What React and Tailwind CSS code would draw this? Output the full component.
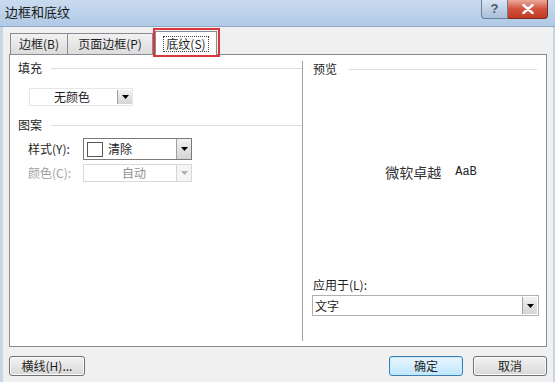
import React from "react";

const font = { fontFamily: '"Noto Sans CJK SC", "Noto Sans", sans-serif' };

function Arrow({ disabled }) {
  return (
    <div className={"flex items-center justify-center w-[15px] h-full border-l " + (disabled ? "border-[#d5d5d5] bg-[#f4f4f4]" : "border-[#a0a0a0] bg-gradient-to-b from-[#f2f2f2] to-[#d4d4d4]")}>
      <svg width="7" height="4" viewBox="0 0 7 4">
        <path d="M0 0 L7 0 L3.5 4 Z" fill={disabled ? "#b0b0b0" : "#000"} />
      </svg>
    </div>
  );
}

function SectionLabel({ children, lineClass }) {
  return (
    <div className="flex items-center">
      <span className="text-[12px] leading-[14px] text-[#1e1e1e]">{children}</span>
      <div className={"h-px bg-[#d5dfe5] flex-1 " + (lineClass || "")} />
    </div>
  );
}

function Btn({ children, primary, className }) {
  return (
    <div
      className={
        "h-[20px] flex items-center justify-center rounded-[3px] border text-[12px] text-[#1e1e1e] " +
        (primary
          ? "border-[#3c7fb1] bg-gradient-to-b from-[#eaf6fd] to-[#bee6fd] shadow-[inset_0_0_0_1px_#c5e9ff]"
          : "border-[#707070] bg-gradient-to-b from-[#f2f2f2] to-[#d8d8d8] shadow-[inset_0_0_0_1px_#fcfcfc]") +
        " " + (className || "")
      }
    >
      {children}
    </div>
  );
}

export default function App() {
  return (
    <div className="w-[555px] h-[382px] bg-[#f0f0f0] flex flex-col overflow-hidden relative" style={font}>
      {/* Title bar */}
      <div className="h-[27px] shrink-0 flex items-start bg-gradient-to-b from-[#c9dbef] to-[#b0c9e5] border-b border-[#8ea8c8] relative">
        <span className="pl-[5px] pt-[4px] text-[13px] leading-[16px] text-[#1a1a1a]">边框和底纹</span>
        <div className="ml-auto mr-[7px] flex h-[20px]">
          <div className="w-[27px] h-[19px] flex items-center justify-center rounded-bl-[4px] border border-t-0 border-[#6f7f96] bg-gradient-to-b from-[#d8e4f2] to-[#a9bfdb] text-[13px] font-bold text-[#4a5a72]" style={{ fontFamily: '"Liberation Sans", sans-serif' }}>?</div>
          <div className="w-[40px] h-[19px] flex items-center justify-center rounded-br-[4px] border border-t-0 border-l-0 border-[#7a2a20] bg-gradient-to-b from-[#e9a99b] via-[#d0513c] to-[#c13a25]">
            <svg width="12" height="10" viewBox="0 0 12 10">
              <path d="M1.5 1 L10.5 9 M10.5 1 L1.5 9" stroke="#fff" strokeWidth="2.6" strokeLinecap="round" />
            </svg>
          </div>
        </div>
      </div>

      {/* Body */}
      <div className="flex-1 flex flex-col border-l-[3px] border-r-[2px] border-[#c9d6e6] pl-[6px] pr-[6px]">
        {/* Tabs */}
        <div className="h-[27px] flex items-end relative pl-[1px]">
          <div className="h-[21px] w-[58px] flex items-center justify-center border border-b-0 border-[#898c95] bg-gradient-to-b from-[#f2f2f2] to-[#dcdcdc] text-[12px] text-[#1e1e1e]">边框(B)</div>
          <div className="h-[21px] w-[85px] flex items-center justify-center border border-b-0 border-l-0 border-[#898c95] bg-gradient-to-b from-[#f2f2f2] to-[#dcdcdc] text-[12px] text-[#1e1e1e]">页面边框(P)</div>
          <div className="h-[24px] w-[62px] ml-[2px] mb-[-1px] z-10 flex items-center justify-center border border-b-0 border-[#898c95] bg-white text-[12px] text-[#1e1e1e]">
            <span className="border border-dotted border-[#444] px-[2px] leading-[14px]">底纹(S)</span>
          </div>
          <div className="absolute left-[144px] top-[1px] w-[67px] h-[29px] border-2 border-[#d9363e] z-20" />
        </div>

        {/* Panel */}
        <div className="h-[293px] border border-[#898c95] bg-white flex">
          {/* Left column */}
          <div className="w-[292px] flex flex-col pl-[8px] pt-[6px]">
            <SectionLabel lineClass="ml-[9px] mr-[0px]">填充</SectionLabel>
            <div className="ml-[11px] mt-[13px] w-[104px] h-[18px] flex border border-[#e6e6e6] bg-white">
              <div className="flex-1 flex items-center pl-[24px] text-[12px] text-[#1e1e1e]">无颜色</div>
              <div className="my-[1px] mr-[1px] w-[14px]">
                <Arrow />
              </div>
            </div>
            <div className="mt-[12px]">
              <SectionLabel lineClass="ml-[9px]">图案</SectionLabel>
            </div>
            <div className="mt-[6px] flex items-center">
              <span className="w-[65px] pl-[10px] text-[12px] text-[#1e1e1e]">样式(Y):</span>
              <div className="w-[109px] h-[22px] flex border border-[#7a7a7a] bg-white">
                <div className="flex-1 flex items-center pl-[3px] gap-[5px]">
                  <div className="w-[16px] h-[15px] border border-[#555]" />
                  <span className="text-[12px] text-[#1e1e1e]">清除</span>
                </div>
                <Arrow />
              </div>
            </div>
            <div className="mt-[4px] flex items-center">
              <span className="w-[65px] pl-[10px] text-[12px] text-[#a0a0a0]">颜色(C):</span>
              <div className="w-[109px] h-[18px] flex border border-[#d9d9d9] bg-white">
                <div className="flex-1 flex items-center justify-center pl-[8px] text-[12px] text-[#909090]">自动</div>
                <Arrow disabled />
              </div>
            </div>
          </div>

          {/* Right column */}
          <div className="flex-1 flex flex-col mt-[6px] mb-[5px] border-l border-[#a0a0a0] pl-[10px] pr-[7px] pt-[1px]">
            <SectionLabel lineClass="ml-[12px] mr-[2px]">预览</SectionLabel>
            <div className="flex-1 flex items-center justify-center pb-[10px] pl-[10px]">
              <span className="text-[14px] text-[#333]">微软卓越</span>
              <span className="ml-[14px] text-[12px] text-[#222]" style={{ fontFamily: '"Liberation Mono", monospace' }}>AaB</span>
            </div>
            <span className="text-[12px] leading-[14px] text-[#1e1e1e]">应用于(L):</span>
            <div className="mt-[3px] mb-[25px] -ml-[1px] h-[21px] flex border border-[#b0b0b0] bg-white">
              <div className="flex-1 flex items-center pl-[2px] text-[12px] text-[#1e1e1e]">文字</div>
              <div className="my-[1px] mr-[1px]">
                <Arrow />
              </div>
            </div>
          </div>
        </div>

        {/* Bottom buttons */}
        <div className="flex items-center mt-[9px]">
          <Btn className="w-[76px]">横线(H)...</Btn>
          <Btn primary className="w-[74px] ml-auto">确定</Btn>
          <Btn className="w-[74px] ml-[10px]">取消</Btn>
        </div>
      </div>
    </div>
  );
}
